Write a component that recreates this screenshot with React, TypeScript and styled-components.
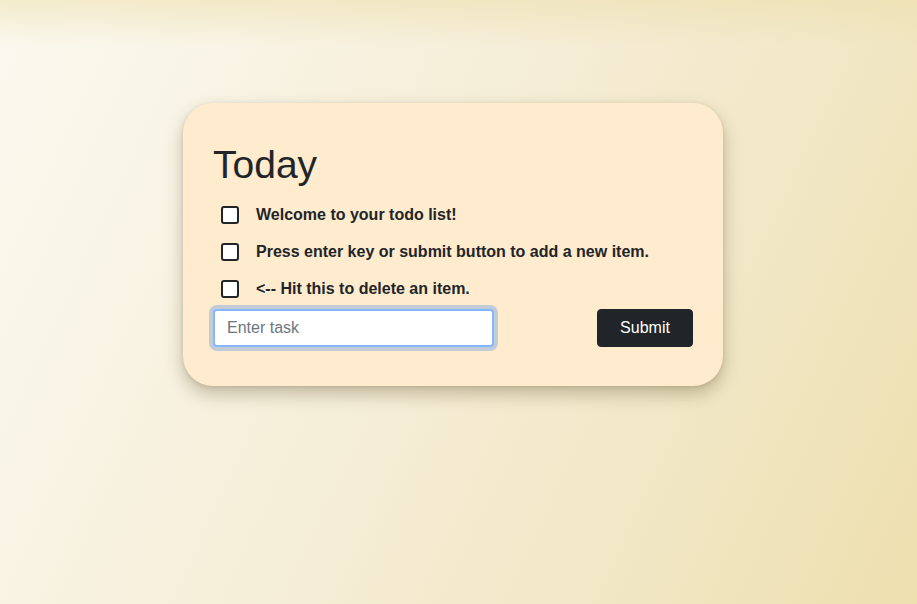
import React from "react";
import styled, { createGlobalStyle } from "styled-components";

const GlobalStyle = createGlobalStyle`
  html {
    height: 100%;
    background:
      linear-gradient(to bottom, rgba(236, 222, 170, 0.5) 0px, rgba(236, 222, 170, 0) 46px),
      linear-gradient(115deg, #fbf9f0 0%, #f6efda 40%, #f2e8c8 70%, #eddfae 100%);
  }
  body {
    margin: 0;
    min-height: 100%;
    font-family: "Liberation Sans", Arial, sans-serif;
    color: #212529;
  }
  * { box-sizing: border-box; }
`;

const Page = styled.main`
  display: flex;
  padding: 103px 0 40px 183px;
`;

const Card = styled.section`
  width: 540px;
  background: #ffebcd;
  border-radius: 30px;
  padding: 39px 30px 39px 30px;
  box-shadow: 0 8px 18px rgba(60, 45, 10, 0.28), 0 1px 4px rgba(60, 45, 10, 0.12);
`;

const Title = styled.h1`
  margin: 0 0 8px;
  font-size: 39px;
  font-weight: 400;
  line-height: 1.2;
  color: #212529;
`;

const List = styled.ul`
  list-style: none;
  margin: 0;
  padding: 0;
`;

const Item = styled.li`
  display: flex;
  align-items: center;
  height: 37px;
  padding-left: 8px;
  gap: 17px;
`;

const Check = styled.input`
  appearance: none;
  margin: 0;
  width: 18px;
  height: 18px;
  border: 2px solid #212529;
  border-radius: 3px;
  background: #fff;
  cursor: pointer;
`;

const ItemText = styled.span`
  font-size: 16px;
  font-weight: 700;
  color: #212529;
`;

const Form = styled.form`
  display: flex;
  justify-content: space-between;
  align-items: center;
  margin-top: 1px;
`;

const TaskInput = styled.input`
  width: 281px;
  height: 38px;
  padding: 6px 12px;
  font-family: "Liberation Sans", Arial, sans-serif;
  font-size: 16px;
  color: #212529;
  caret-color: #212529;
  background: #fff;
  border: 2px solid #86b7fe;
  border-radius: 4px;
  box-shadow: 0 0 0 4px rgba(13, 110, 253, 0.25);
  outline: none;
  &::placeholder {
    color: #6c757d;
  }
`;

const SubmitButton = styled.button`
  width: 96px;
  height: 38px;
  background: #212529;
  color: #fff;
  border: 1px solid #212529;
  border-radius: 4px;
  font-family: "Liberation Sans", Arial, sans-serif;
  font-size: 16px;
  cursor: pointer;
`;

const items = [
  "Welcome to your todo list!",
  "Press enter key or submit button to add a new item.",
  "<-- Hit this to delete an item.",
];

export default function App() {
  return (
    <>
      <GlobalStyle />
      <Page>
        <Card>
          <Title>Today</Title>
          <List>
            {items.map((t) => (
              <Item key={t}>
                <Check type="checkbox" />
                <ItemText>{t}</ItemText>
              </Item>
            ))}
          </List>
          <Form onSubmit={(e) => e.preventDefault()}>
            <TaskInput type="text" placeholder="Enter task" autoFocus />
            <SubmitButton type="submit">Submit</SubmitButton>
          </Form>
        </Card>
      </Page>
    </>
  );
}
